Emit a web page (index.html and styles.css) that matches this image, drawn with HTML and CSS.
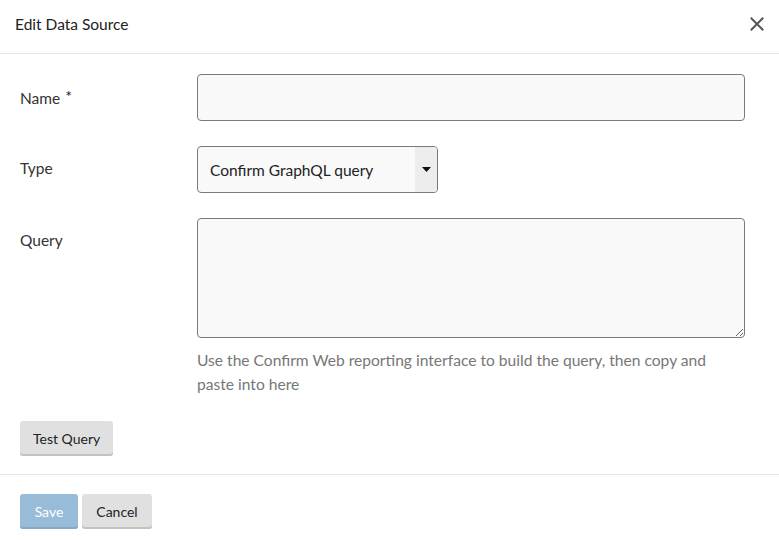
FILE: index.html
```html
<!DOCTYPE html>
<html>
<head>
<meta charset="utf-8">
<link rel="stylesheet" href="styles.css">
</head>
<body>
<div class="modal">
  <header class="modal-header">
    <h1 class="modal-title">Edit Data Source</h1>
    <button class="close-btn" aria-label="Close">
      <svg width="14" height="14" viewBox="0 0 14 14"><path d="M1.5 1.5 L12.5 12.5 M12.5 1.5 L1.5 12.5" stroke="#555" stroke-width="2" stroke-linecap="square"/></svg>
    </button>
  </header>
  <div class="modal-body">
    <div class="form-row">
      <label class="field-label">Name <span class="req">*</span></label>
      <div class="field"><input class="text-input" type="text"></div>
    </div>
    <div class="form-row">
      <label class="field-label">Type</label>
      <div class="field">
        <div class="select">
          <span class="select-value">Confirm GraphQL query</span>
          <span class="select-arrow"><svg width="9" height="5" viewBox="0 0 9 5"><path d="M0 0 H9 L4.5 5 Z" fill="#111"/></svg></span>
        </div>
      </div>
    </div>
    <div class="form-row">
      <label class="field-label">Query</label>
      <div class="field">
        <textarea class="text-area"></textarea>
        <p class="help">Use the Confirm Web reporting interface to build the query, then copy and paste into here</p>
      </div>
    </div>
    <div class="actions-row">
      <button class="btn">Test Query</button>
    </div>
  </div>
  <footer class="modal-footer">
    <button class="btn btn-primary">Save</button>
    <button class="btn btn-cancel">Cancel</button>
  </footer>
</div>
</body>
</html>
```
FILE: styles.css
```css
* { box-sizing: border-box; }
html, body { margin: 0; padding: 0; background: #fff; }
body {
  font-family: Lato, "Open Sans", "Liberation Sans", sans-serif;
  color: #333;
  font-size: 14px;
}
.modal { width: 779px; }
.modal-header {
  height: 54px;
  display: flex;
  align-items: center;
  justify-content: space-between;
  padding: 0 15px 0 15px;
  border-bottom: 1px solid #e5e5e5;
}
.modal-title {
  margin: 0;
  font-size: 15.5px;
  font-weight: 400;
  color: #222;
  padding-bottom: 6px;
}
.close-btn {
  border: 0;
  background: none;
  padding: 0;
  width: 14px;
  height: 14px;
  margin-bottom: 6px;
  display: flex;
}
.modal-body {
  padding: 20px 34px 18px 20px;
  display: flex;
  flex-direction: column;
  gap: 25px;
}
.form-row {
  display: grid;
  grid-template-columns: 177px 548px;
}
.field-label {
  padding-top: 12px;
  line-height: 20px;
  font-size: 15.5px;
  color: #333;
}
.req { vertical-align: 2px; font-size: 16px; margin-left: 1px; color: #222; }
.text-input {
  display: block;
  width: 548px;
  height: 47px;
  border: 1px solid #7a7a7a;
  border-radius: 4px;
  background: #f9f9f9;
  font: inherit;
}
.select {
  width: 241px;
  height: 47px;
  border: 1px solid #7a7a7a;
  border-radius: 4px;
  background: #f9f9f9;
  display: flex;
  overflow: hidden;
}
.select-value {
  flex: 1;
  display: flex;
  align-items: center;
  padding-left: 12px;
  font-size: 15.5px;
  color: #222;
}
.select-arrow {
  width: 22px;
  background: #ededed;
  display: flex;
  align-items: center;
  justify-content: center;
}
.text-area {
  display: block;
  width: 548px;
  height: 120px;
  border: 1px solid #7a7a7a;
  border-radius: 4px;
  background: #f9f9f9;
  font: inherit;
  margin: 0;
}
.help {
  margin: 10px 0 0 0;
  color: #777;
  font-size: 15.6px;
  line-height: 24px;
  width: 530px;
}
.actions-row { display: flex; }
.btn {
  font: inherit;
  font-size: 14px;
  color: #222;
  height: 35px;
  padding: 0 13px;
  border: 0;
  border-radius: 3px;
  background: #e0e0e0;
  box-shadow: inset 0 -2px 0 #c2c2c2;
}
.modal-footer {
  border-top: 1px solid #e5e5e5;
  padding: 19px 20px 13px 20px;
  display: flex;
  gap: 4px;
}
.btn-primary {
  background: #98bcd8;
  color: #fff;
  box-shadow: inset 0 -2px 0 #88a9c3;
  width: 58px;
  padding: 0;
}
.btn-cancel { width: 70px; padding: 0; }
```
